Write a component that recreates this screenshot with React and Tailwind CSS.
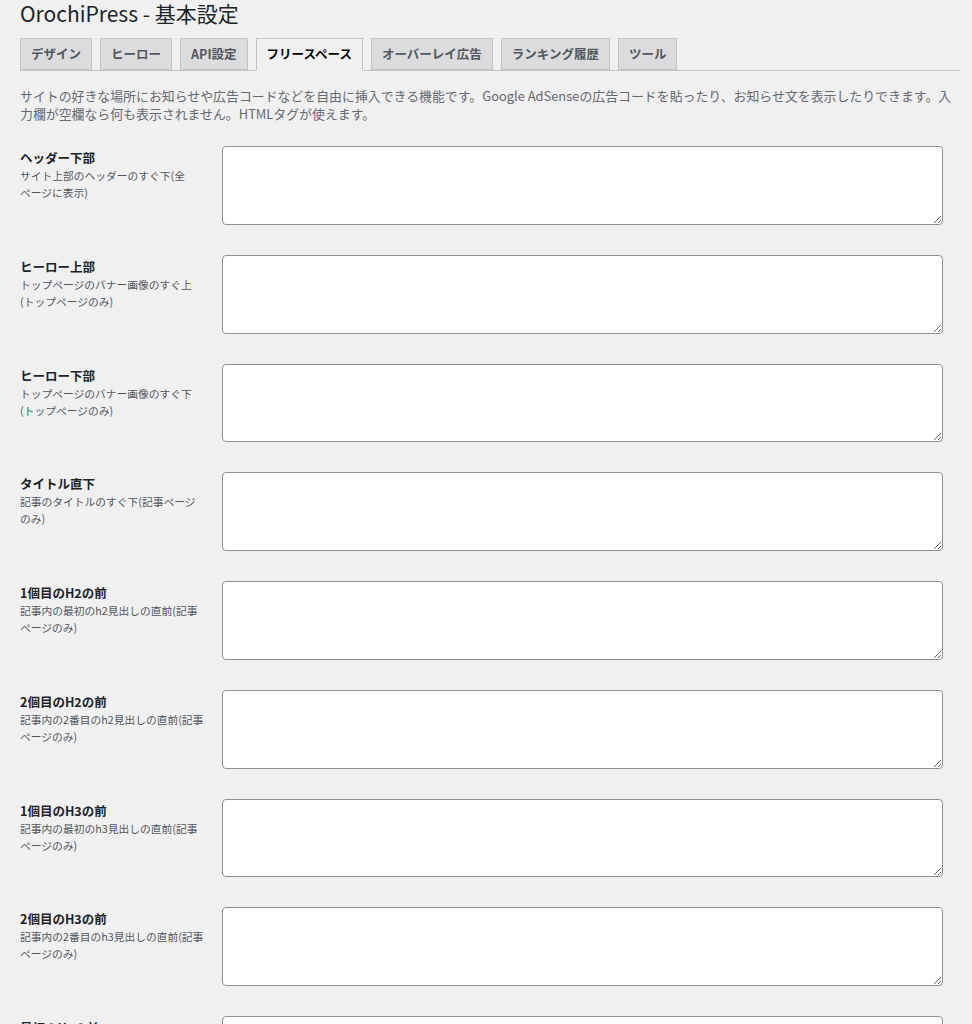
import { useState } from "react";

const tabs = [
  "デザイン",
  "ヒーロー",
  "API設定",
  "フリースペース",
  "オーバーレイ広告",
  "ランキング履歴",
  "ツール",
];

const fields = [
  { title: "ヘッダー下部", desc: ["サイト上部のヘッダーのすぐ下(全", "ページに表示)"] },
  { title: "ヒーロー上部", desc: ["トップページのバナー画像のすぐ上", "(トップページのみ)"] },
  { title: "ヒーロー下部", desc: ["トップページのバナー画像のすぐ下", "(トップページのみ)"] },
  { title: "タイトル直下", desc: ["記事のタイトルのすぐ下(記事ページ", "のみ)"] },
  { title: "1個目のH2の前", desc: ["記事内の最初のh2見出しの直前(記事", "ページのみ)"] },
  { title: "2個目のH2の前", desc: ["記事内の2番目のh2見出しの直前(記事", "ページのみ)"] },
  { title: "1個目のH3の前", desc: ["記事内の最初のh3見出しの直前(記事", "ページのみ)"] },
  { title: "2個目のH3の前", desc: ["記事内の2番目のh3見出しの直前(記事", "ページのみ)"] },
  { title: "最初のH4の前", desc: ["記事内の最初のh4見出しの直前(記事", "ページのみ)"] },
];

export default function App() {
  const [active, setActive] = useState("フリースペース");

  return (
    <div
      className="min-h-screen bg-[#f0f0f1] pl-[20px] pr-[12px] text-[#3c434a] overflow-hidden"
      style={{ fontFamily: '"Noto Sans CJK JP", "Noto Sans", sans-serif' }}
    >
      <h1 className="text-[21px] leading-[27px] font-normal text-[#1d2327]">
        OrochiPress - 基本設定
      </h1>

      <div className="mt-[11px] flex gap-[8px] border-b border-[#c3c4c7] h-[33px]">
        {tabs.map((t) => (
          <button
            key={t}
            onClick={() => setActive(t)}
            className={
              t === active
                ? "h-[33px] px-[10px] border border-[#c3c4c7] border-b-[#f0f0f1] bg-[#f0f0f1] text-[12.5px] font-bold text-black"
                : "h-[32px] px-[10px] border border-[#c3c4c7] bg-[#dcdcde] text-[12.5px] font-bold text-[#50575e]"
            }
          >
            {t}
          </button>
        ))}
      </div>

      <p className="mt-[16px] text-[12.9px] leading-[18px] text-[#646970]">
        サイトの好きな場所にお知らせや広告コードなどを自由に挿入できる機能です。Google AdSenseの広告コードを貼ったり、お知らせ文を表示したりできます。入力欄が空欄なら何も表示されません。HTMLタグが使えます。
      </p>

      <div className="mt-[8px]">
        {fields.map((f) => (
          <div key={f.title} className="flex py-[15px]">
            <div className="w-[202px] shrink-0 pt-[3px] pr-[10px]">
              <div className="text-[12.5px] leading-[18px] font-bold text-[#1d2327]">{f.title}</div>
              {f.desc.map((line) => (
                <div key={line} className="whitespace-nowrap text-[10.75px] leading-[17px] text-[#50575e]">
                  {line}
                </div>
              ))}
            </div>
            <textarea className="w-[721px] h-[78.75px] shrink-0 bg-white border border-[#8c8f94] rounded-[4px]" />
          </div>
        ))}
      </div>
    </div>
  );
}
